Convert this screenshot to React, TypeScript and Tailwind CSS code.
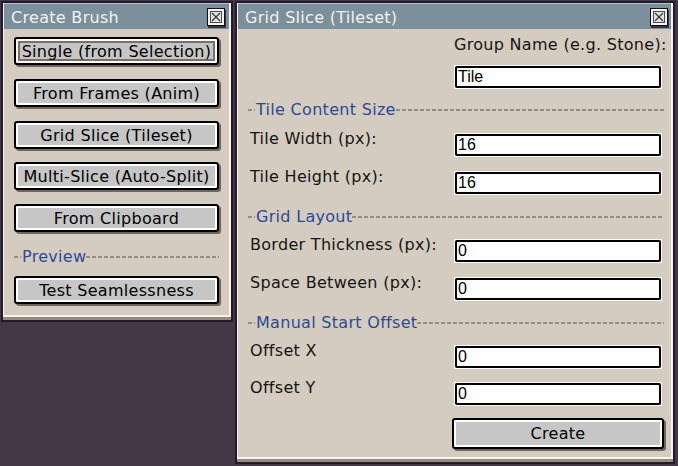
import React from "react";

const DASH =
  "h-[2px] bg-[linear-gradient(to_right,#9a8b80_4px,transparent_4px)] bg-[length:6px_2px]";

function CloseBtn() {
  return (
    <svg width="19" height="20" viewBox="0 0 19 20" className="block">
      <rect x="1" y="2" width="18" height="18" fill="#3a3040" />
      <rect x="0" y="0" width="18" height="18" fill="#111" />
      <rect x="1" y="1" width="16" height="16" fill="#f4f4f4" />
      <rect x="3.5" y="3.5" width="11" height="11" fill="#e2e2e2" stroke="#4a4a4a" strokeWidth="1" />
      <path d="M5 5 L13 13 M13 5 L5 13" stroke="#3a3a3a" strokeWidth="1.2" />
    </svg>
  );
}

function Panel({
  title,
  className,
  closePr,
  children,
}: {
  title: string;
  className: string;
  closePr: string;
  children: React.ReactNode;
}) {
  return (
    <div className={`border-2 border-[#231b29] bg-[#9a897d] flex flex-col pb-[3px] ${className}`}>
      <div className="flex-1 flex flex-col bg-[#d4ccc0] border-l border-r-2 border-b-2 border-[#f6f4f0]">
        <div
          className={`h-[26px] shrink-0 bg-[#7b8f9c] border-t border-[#aec4d2] flex items-center justify-between pl-[7px] pt-[2px] ${closePr} text-[#f2f2f2] text-[16px] leading-[19px]`}
        >
          <span className="whitespace-nowrap">{title}</span>
          <CloseBtn />
        </div>
        {children}
      </div>
    </div>
  );
}

function Btn({
  children,
  focus,
  className,
}: {
  children: React.ReactNode;
  focus?: boolean;
  className: string;
}) {
  return (
    <div
      className={`relative shrink-0 rounded-[3px] border-2 border-black bg-[#c6c6c6] shadow-[inset_2px_2px_0_#ffffff,inset_-2px_-2px_0_#ffffff,2px_2px_0_#70665f] flex items-center justify-center text-[16px] leading-[19px] text-black whitespace-nowrap ${className}`}
    >
      {focus && <div className="absolute inset-[2px] border-2 border-[#7f6e64]" />}
      <span className="relative">{children}</span>
    </div>
  );
}

function Header({ children, className }: { children: React.ReactNode; className: string }) {
  return (
    <div className={`flex items-center h-[19px] ${className}`}>
      <div className={`w-[7px] shrink-0 ${DASH}`} />
      <span className="text-[#2b4a94] text-[16px] leading-[19px] ml-[1px] whitespace-nowrap">{children}</span>
      <div className={`flex-1 ${DASH}`} />
    </div>
  );
}

function Input({ value, className }: { value: string; className: string }) {
  return (
    <div className={`h-[24px] w-[208px] shrink-0 border border-[#fbfbfb] ${className}`}>
      <div className="h-full rounded-[2px] border-2 border-black bg-white flex items-center pl-[1px] font-['Liberation_Sans',sans-serif] text-[16px] tracking-normal text-black">
        {value}
      </div>
    </div>
  );
}

function Row({ label, value, className }: { label: string; value: string; className: string }) {
  return (
    <div className={`flex justify-between items-start ${className}`}>
      <span className="text-[16px] leading-[19px] text-[#141414] whitespace-nowrap">{label}</span>
      <Input value={value} className="mt-[4px]" />
    </div>
  );
}

export default function App() {
  return (
    <div className="w-[678px] h-[466px] bg-[#433848] flex items-start gap-[2px] pl-[1px] pt-[1px] overflow-hidden font-['DejaVu_Sans',sans-serif] tracking-[0.3px]">
      <Panel title="Create Brush" className="w-[232px] h-[321px]" closePr="pr-[3px]">
        <div className="flex flex-col px-[10px] pt-[8px]">
          <Btn focus className="h-[28px]">Single (from Selection)</Btn>
          <Btn className="h-[28px] mt-[14px]">From Frames (Anim)</Btn>
          <Btn className="h-[28px] mt-[14px]">Grid Slice (Tileset)</Btn>
          <Btn className="h-[28px] mt-[13px]">Multi-Slice (Auto-Split)</Btn>
          <Btn className="h-[28px] mt-[14px]">From Clipboard</Btn>
          <Header className="mt-[15px]">Preview</Header>
          <Btn className="h-[28px] mt-[10px]">Test Seamlessness</Btn>
        </div>
      </Panel>
      <Panel title="Grid Slice (Tileset)" className="w-[440px] h-[463px]" closePr="pr-[2px]">
        <div className="flex flex-col pl-[12px] pr-[9px] pt-[6px]">
          <div className="self-end w-[210px] -mr-[2px] whitespace-nowrap text-[16px] leading-[19px] text-[#141414]">
            Group Name (e.g. Stone):
          </div>
          <Input value="Tile" className="self-end mt-[11px]" />
          <Header className="mt-[11px] -ml-[2px] -mr-[2px]">Tile Content Size</Header>
          <Row label="Tile Width (px):" value="16" className="mt-[10px]" />
          <Row label="Tile Height (px):" value="16" className="mt-[10px]" />
          <Header className="mt-[12px] -ml-[2px] -mr-[2px]">Grid Layout</Header>
          <Row label="Border Thickness (px):" value="0" className="mt-[9px]" />
          <Row label="Space Between (px):" value="0" className="mt-[10px]" />
          <Header className="mt-[12px] -ml-[2px] -mr-[2px]">Manual Start Offset</Header>
          <Row label="Offset X" value="0" className="mt-[9px]" />
          <Row label="Offset Y" value="0" className="mt-[9px]" />
          <Btn className="self-end w-[212px] h-[31px] mt-[12px] -mr-[2px]">Create</Btn>
        </div>
      </Panel>
    </div>
  );
}
